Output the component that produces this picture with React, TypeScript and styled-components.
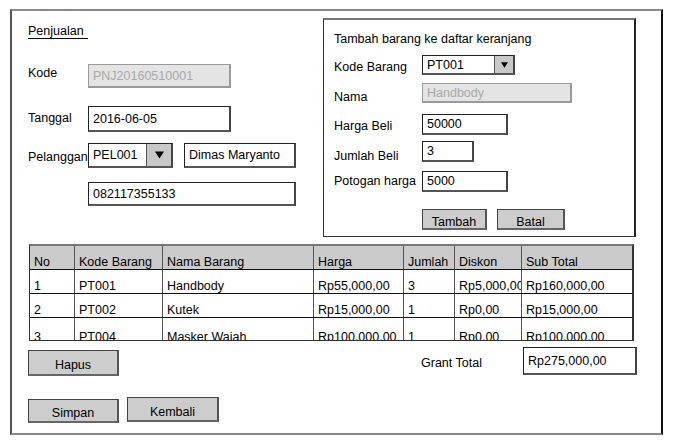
import React from "react";
import styled, { createGlobalStyle } from "styled-components";

const Global = createGlobalStyle`
  html, body { margin: 0; padding: 0; background: #fff; }
  body { font-family: "Liberation Sans", Arial, sans-serif; font-size: 12.5px; color: #000; }
  * { box-sizing: border-box; }
`;

const Frame = styled.div`
  margin: 9px 0 0 10px;
  width: 653px;
  height: 426px;
  border-top: 2px solid #8a8a8a;
  border-bottom: 2px solid #8a8a8a;
  border-left: 2px solid #555;
  border-right: 2px solid #111;
  padding: 7px 25px 0 16px;
`;

const TopArea = styled.div`
  display: flex;
  justify-content: space-between;
  height: 219px;
`;

const LeftCol = styled.div`
  width: 268px;
  display: flex;
  flex-direction: column;
  align-items: flex-start;
`;

const Title = styled.div`
  margin-top: 6px;
  width: 60px;
  line-height: 14px;
  border-bottom: 1px solid #000;
`;

const Row = styled.div<{ $mt: number; $labelW: number }>`
  margin-top: ${(p) => p.$mt}px;
  display: grid;
  grid-template-columns: ${(p) => p.$labelW}px auto;
  align-items: start;
  width: 100%;
`;

const Label = styled.div<{ $pt: number }>`
  padding-top: ${(p) => p.$pt}px;
  line-height: 14px;
  white-space: nowrap;
`;

const Input = styled.div<{ $w: number; $h: number; $disabled?: boolean }>`
  width: ${(p) => p.$w}px;
  height: ${(p) => p.$h}px;
  border: 1px solid #222;
  border-right: 2px solid #444;
  border-bottom: 2px solid #555;
  background: ${(p) => (p.$disabled ? "#e4e4e4" : "#fff")};
  color: ${(p) => (p.$disabled ? "#a8a8a8" : "#000")};
  border-color: ${(p) => (p.$disabled ? "#9a9a9a" : undefined)};
  padding-left: 4px;
  display: flex;
  align-items: center;
  white-space: nowrap;
  overflow: hidden;
`;

const InlineGroup = styled.div`
  display: flex;
  gap: 11px;
`;

const Combo = styled.div<{ $w: number; $h: number }>`
  width: ${(p) => p.$w}px;
  height: ${(p) => p.$h}px;
  border: 1px solid #222;
  border-right: 2px solid #444;
  border-bottom: 2px solid #555;
  display: flex;
  background: #fff;
`;

const ComboText = styled.div`
  flex: 1;
  padding-left: 4px;
  display: flex;
  align-items: center;
`;

const ComboButton = styled.div<{ $w: number }>`
  width: ${(p) => p.$w}px;
  background: #c8c8c8;
  border-left: 1px solid #555;
  display: flex;
  align-items: center;
  justify-content: center;
`;

const Panel = styled.div`
  width: 313px;
  height: 219px;
  border: 1px solid #333;
  border-top: 2px solid #777;
  border-right: 2px solid #222;
  padding-left: 10px;
  display: flex;
  flex-direction: column;
`;

const PanelTitle = styled.div`
  margin-top: 12px;
  line-height: 14px;
`;

const ButtonRow = styled.div<{ $mt: number; $ml: number; $gap: number }>`
  margin-top: ${(p) => p.$mt}px;
  margin-left: ${(p) => p.$ml}px;
  display: flex;
  align-items: flex-start;
  gap: ${(p) => p.$gap}px;
`;

const Button = styled.div<{ $w: number; $h: number; $mt?: number }>`
  width: ${(p) => p.$w}px;
  height: ${(p) => p.$h}px;
  margin-top: ${(p) => p.$mt || 0}px;
  background: #cdcdcd;
  border: 1px solid #444;
  border-right: 2px solid #555;
  border-bottom: 2px solid #666;
  display: flex;
  align-items: center;
  justify-content: center;
  padding-top: 5px;
`;

const Table = styled.div`
  margin: 7px 0 0 1px;
  width: 605px;
  height: 97px;
  border: 1px solid #333;
  border-top: 2px solid #777;
  border-right: 2px solid #333;
  overflow: hidden;
`;

const cols = "44px 88px 151px 90px 51px 67px 1fr";

const HeadRow = styled.div`
  display: grid;
  grid-template-columns: ${cols};
  height: 24px;
  background: #cbcbcb;
  border-bottom: 1px solid #111;
`;

const BodyRow = styled.div`
  display: grid;
  grid-template-columns: ${cols};
  height: 24px;
  border-bottom: 1px solid #111;
`;

const Cell = styled.div<{ $first?: boolean; $pt: number }>`
  border-left: ${(p) => (p.$first ? "none" : "1px solid #555")};
  padding: ${(p) => p.$pt}px 0 0 4px;
  line-height: 14px;
  white-space: nowrap;
  overflow: hidden;
`;

const BottomRow = styled.div`
  margin-top: 6px;
  display: flex;
  align-items: flex-start;
`;

const TotalGroup = styled.div`
  margin-left: auto;
  margin-right: -1px;
  display: flex;
  align-items: center;
`;

const TotalLabel = styled.div`
  width: 102px;
  padding-top: 4px;
`;

const Arrow = ({ w }: { w: number }) => (
  <svg width={w} height={Math.round(w * 0.85)} viewBox="0 0 10 8">
    <polygon points="0,0 10,0 5,8" fill="#000" />
  </svg>
);

const headers = ["No", "Kode Barang", "Nama Barang", "Harga", "Jumlah", "Diskon", "Sub Total"];
const rows = [
  ["1", "PT001", "Handbody", "Rp55,000,00", "3", "Rp5,000,00", "Rp160,000,00"],
  ["2", "PT002", "Kutek", "Rp15,000,00", "1", "Rp0,00", "Rp15,000,00"],
  ["3", "PT004", "Masker Wajah", "Rp100,000,00", "1", "Rp0,00", "Rp100,000,00"],
];

export default function App() {
  return (
    <>
      <Global />
      <Frame>
        <TopArea>
          <LeftCol>
            <Title>Penjualan</Title>
            <Row $mt={25} $labelW={60}>
              <Label $pt={2}>Kode</Label>
              <Input $w={143} $h={24} $disabled>PNJ20160510001</Input>
            </Row>
            <Row $mt={18} $labelW={60}>
              <Label $pt={5}>Tanggal</Label>
              <Input $w={143} $h={26}>2016-06-05</Input>
            </Row>
            <Row $mt={11} $labelW={60}>
              <Label $pt={7}>Pelanggan</Label>
              <InlineGroup>
                <Combo $w={85} $h={25}>
                  <ComboText>PEL001</ComboText>
                  <ComboButton $w={25}>
                    <Arrow w={9} />
                  </ComboButton>
                </Combo>
                <Input $w={112} $h={25}>Dimas Maryanto</Input>
              </InlineGroup>
            </Row>
            <Row $mt={14} $labelW={60}>
              <span />
              <Input $w={208} $h={24}>082117355133</Input>
            </Row>
          </LeftCol>
          <Panel>
            <PanelTitle>Tambah barang ke daftar keranjang</PanelTitle>
            <Row $mt={9} $labelW={88}>
              <Label $pt={5}>Kode Barang</Label>
              <Combo $w={93} $h={20}>
                <ComboText>PT001</ComboText>
                <ComboButton $w={19}>
                  <Arrow w={7} />
                </ComboButton>
              </Combo>
            </Row>
            <Row $mt={8} $labelW={88}>
              <Label $pt={7}>Nama</Label>
              <Input $w={150} $h={20} $disabled>Handbody</Input>
            </Row>
            <Row $mt={10} $labelW={88}>
              <Label $pt={5}>Harga Beli</Label>
              <Input $w={86} $h={21}>50000</Input>
            </Row>
            <Row $mt={6} $labelW={88}>
              <Label $pt={8}>Jumlah Beli</Label>
              <Input $w={52} $h={21}>3</Input>
            </Row>
            <Row $mt={8} $labelW={88}>
              <Label $pt={3}>Potogan harga</Label>
              <Input $w={86} $h={21}>5000</Input>
            </Row>
            <ButtonRow $mt={17} $ml={88} $gap={10}>
              <Button $w={65} $h={21}>Tambah</Button>
              <Button $w={68} $h={21}>Batal</Button>
            </ButtonRow>
          </Panel>
        </TopArea>
        <Table>
          <HeadRow>
            {headers.map((h, i) => (
              <Cell key={h} $first={i === 0} $pt={9}>{h}</Cell>
            ))}
          </HeadRow>
          {rows.map((r, ri) => (
            <BodyRow key={r[0]}>
              {r.map((c, i) => (
                <Cell key={i} $first={i === 0} $pt={ri === 2 ? 12 : 9}>{c}</Cell>
              ))}
            </BodyRow>
          ))}
        </Table>
        <BottomRow>
          <Button $w={91} $h={26} $mt={3}>Hapus</Button>
          <TotalGroup>
            <TotalLabel>Grant Total</TotalLabel>
            <Input $w={114} $h={28}>Rp275,000,00</Input>
          </TotalGroup>
        </BottomRow>
        <ButtonRow $mt={21} $ml={0} $gap={8}>
          <Button $w={91} $h={24} $mt={2}>Simpan</Button>
          <Button $w={92} $h={25}>Kembali</Button>
        </ButtonRow>
      </Frame>
    </>
  );
}
